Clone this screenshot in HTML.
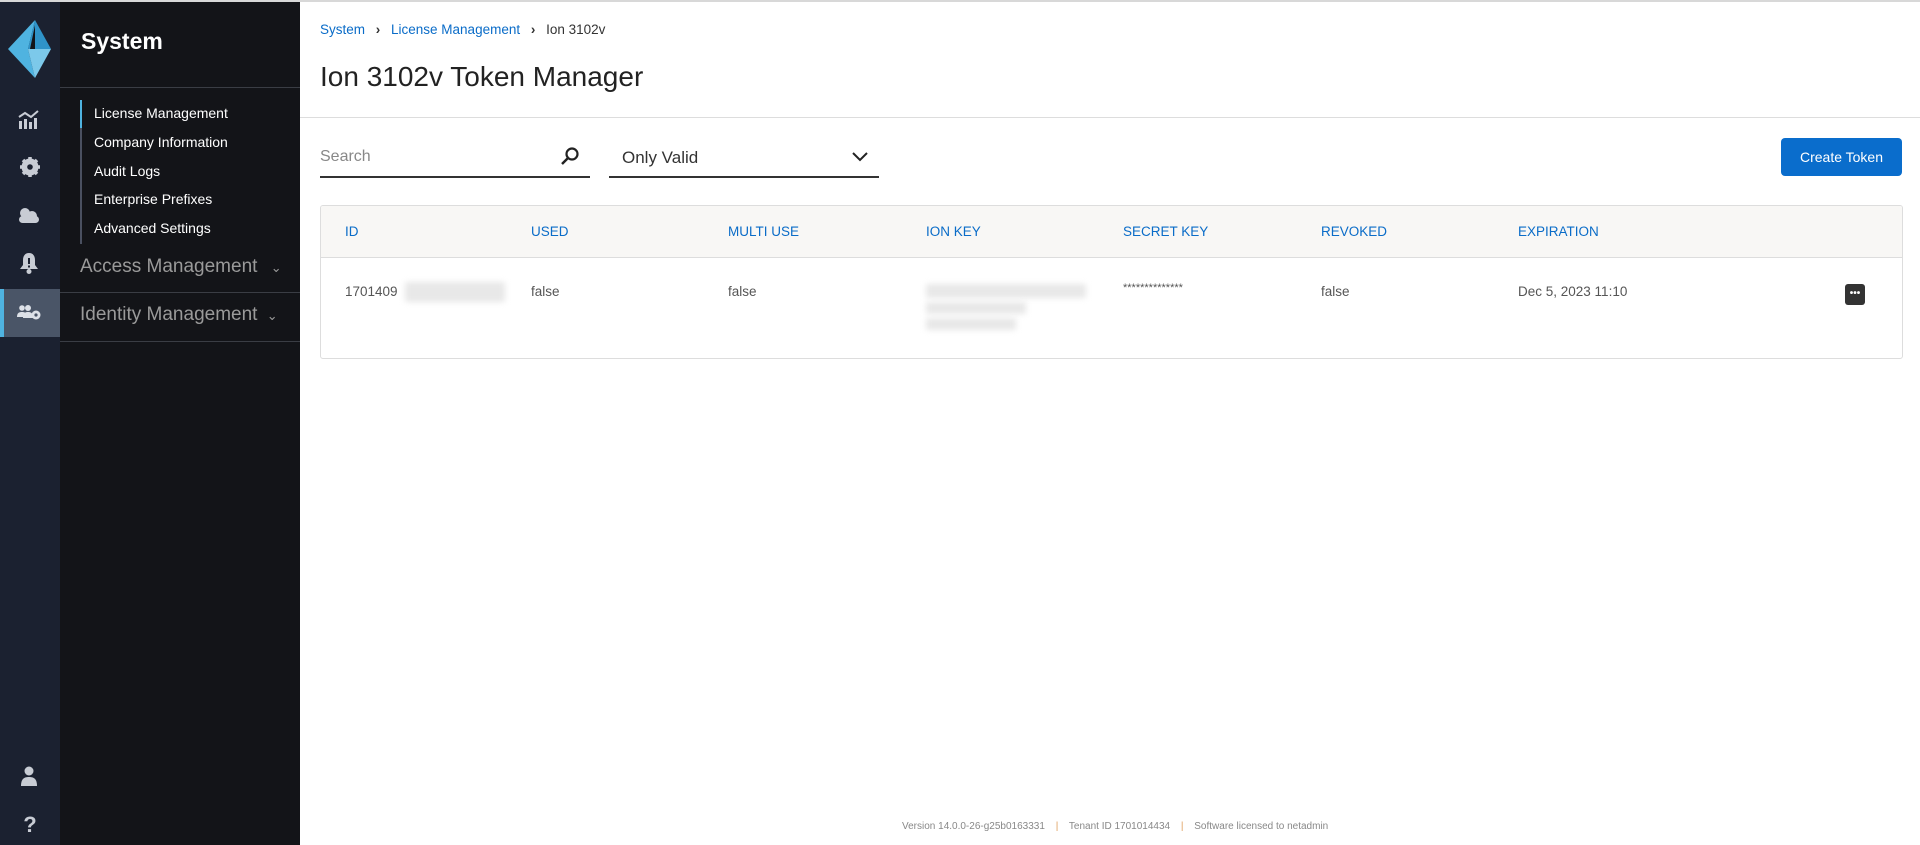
<!DOCTYPE html>
<html><head><meta charset="utf-8"><style>
*{box-sizing:border-box;margin:0;padding:0}
body{width:1920px;height:845px;overflow:hidden;font-family:"Liberation Sans",sans-serif;background:#fff;position:relative}
.abs{position:absolute}
.rail{left:0;top:0;width:60px;height:845px;background:#1b2130}
.sub{left:60px;top:0;width:240px;height:845px;background:#131418}
.ic{left:0;width:60px;text-align:center;color:#c8ccd4}
.nav{left:94px;color:#fff;font-size:14px}
.hdr{color:#0a6cc8;font-size:13.5px;top:224px}
.cell{color:#555;font-size:13.5px;top:284px}
.blur{background:#e8e8e8;filter:blur(3px)}
</style></head><body>
<div class="abs" style="left:0;top:0;width:1920px;height:2px;background:#d8d8d8;z-index:5"></div>
<div class="abs rail"></div>
<div class="abs sub"></div>
<svg class="abs" style="left:8px;top:20px" width="46" height="60" viewBox="0 0 46 60"><polygon points="27,0 0,29 20,29" fill="#4fb3e0"/><polygon points="27,0 20,29 43,29" fill="#2f93c8"/><polygon points="0,29 20,29 27,58" fill="#4fb3e0"/><polygon points="20,29 43,29 27,58" fill="#7cc9ea"/><polygon points="27,5 22,29 27,29" fill="#131418"/></svg>
<div class="abs" style="left:0;top:289px;width:60px;height:48px;background:#4a5567"></div>
<div class="abs" style="left:0;top:289px;width:4px;height:48px;background:#4fb3e0"></div>
<svg class="abs" style="left:18px;top:110px" width="22" height="20" viewBox="0 0 22 20" fill="#c8ccd4"><rect x="1" y="11" width="3" height="8"/><rect x="6" y="9" width="3" height="10"/><rect x="11" y="12" width="3" height="7"/><rect x="16" y="8" width="3" height="11"/><polyline points="1,7 7,3 13,7 20,1" fill="none" stroke="#c8ccd4" stroke-width="2"/></svg>
<svg class="abs" style="left:20px;top:157px" width="20" height="20" viewBox="0 0 20 20"><circle cx="10" cy="10" r="6.5" fill="none" stroke="#c8ccd4" stroke-width="4"/><g stroke="#c8ccd4" stroke-width="3.5"><line x1="10" y1="0" x2="10" y2="20"/><line x1="0" y1="10" x2="20" y2="10"/><line x1="3" y1="3" x2="17" y2="17"/><line x1="17" y1="3" x2="3" y2="17"/></g><circle cx="10" cy="10" r="2.8" fill="#1b2130"/></svg>
<svg class="abs" style="left:17px;top:206px" width="24" height="18" viewBox="0 0 24 18" fill="#c8ccd4"><circle cx="8" cy="7" r="5"/><circle cx="15" cy="10" r="5"/><rect x="2" y="10" width="20" height="7" rx="3.5"/></svg>
<svg class="abs" style="left:19px;top:252px" width="20" height="22" viewBox="0 0 20 22" fill="#c8ccd4"><path d="M10 1c-4 0-6 3-6 7v5l-3 4h18l-3-4V8c0-4-2-7-6-7z"/><circle cx="10" cy="19.5" r="2.5"/><rect x="9" y="6" width="2" height="6" fill="#1b2130"/><rect x="9" y="13.5" width="2" height="2" fill="#1b2130"/></svg>
<svg class="abs" style="left:17px;top:304px" width="26" height="17" viewBox="0 0 26 17" fill="#dde1e8"><circle cx="5" cy="4" r="2.8"/><circle cx="11" cy="4" r="3"/><path d="M0 13c0-4 2-5 5-5s5 1 5 5z"/><path d="M6 14c0-5 2-6 5-6s5 1 5 6z"/><circle cx="19" cy="11" r="4.5"/><circle cx="19" cy="11" r="1.6" fill="#4a5567"/></svg>
<svg class="abs" style="left:20px;top:766px" width="18" height="20" viewBox="0 0 18 20" fill="#c8ccd4"><circle cx="9" cy="5" r="4.5"/><path d="M1 20c0-7 3-9 8-9s8 2 8 9z"/></svg>
<div class="abs ic" style="top:812px;font-size:22px;font-weight:bold">?</div>

<div class="abs" style="left:81px;top:28px;color:#fff;font-size:23px;font-weight:bold">System</div>
<div class="abs" style="left:60px;top:87px;width:240px;height:1px;background:#3a3d44"></div>
<div class="abs" style="left:80px;top:100px;width:2px;height:144px;background:#4a5060"></div>
<div class="abs" style="left:80px;top:100px;width:2px;height:28px;background:#4fb3e0"></div>
<div class="abs nav" style="top:105px">License Management</div>
<div class="abs nav" style="top:134px">Company Information</div>
<div class="abs nav" style="top:163px">Audit Logs</div>
<div class="abs nav" style="top:191px">Enterprise Prefixes</div>
<div class="abs nav" style="top:220px">Advanced Settings</div>
<div class="abs" style="left:80px;top:256px;color:#9a9a9a;font-size:19px">Access Management <span style="font-size:13px;margin-left:8px">⌄</span></div>
<div class="abs" style="left:60px;top:292px;width:240px;height:1px;background:#3a3d44"></div>
<div class="abs" style="left:80px;top:304px;color:#9a9a9a;font-size:19px">Identity Management <span style="font-size:13px;margin-left:4px">⌄</span></div>
<div class="abs" style="left:60px;top:341px;width:240px;height:1px;background:#3a3d44"></div>

<div class="abs" style="left:320px;top:22px;font-size:13.5px;color:#0a6cc8">System <b style="color:#333;margin:0 7px">›</b> License Management <b style="color:#333;margin:0 7px">›</b> <span style="color:#333">Ion 3102v</span></div>
<div class="abs" style="left:320px;top:61px;font-size:28px;color:#222">Ion 3102v Token Manager</div>
<div class="abs" style="left:300px;top:117px;width:1620px;height:1px;background:#ddd"></div>

<div class="abs" style="left:320px;top:148px;font-size:16px;color:#888">Search</div>
<svg class="abs" style="left:560px;top:146px" width="20" height="20" viewBox="0 0 20 20"><circle cx="12" cy="8" r="5.5" fill="none" stroke="#222" stroke-width="2.2"/><line x1="8" y1="12" x2="2" y2="18" stroke="#222" stroke-width="2.5"/></svg>
<div class="abs" style="left:320px;top:176px;width:270px;height:2px;background:#333"></div>
<div class="abs" style="left:622px;top:148px;font-size:17px;color:#333">Only Valid</div>
<svg class="abs" style="left:852px;top:152px" width="16" height="10" viewBox="0 0 16 10"><polyline points="1,1 8,8 15,1" fill="none" stroke="#222" stroke-width="2"/></svg>
<div class="abs" style="left:609px;top:176px;width:270px;height:2px;background:#333"></div>
<div class="abs" style="left:1781px;top:138px;width:121px;height:38px;background:#0a6dcc;border-radius:4px;color:#fff;font-size:14px;text-align:center;line-height:38px">Create Token</div>

<div class="abs" style="left:320px;top:205px;width:1583px;height:154px;border:1px solid #ddd;border-radius:3px;overflow:hidden">
<div style="height:52px;background:#f8f7f5;border-bottom:1px solid #ddd"></div></div>
<div class="abs hdr" style="left:345px">ID</div>
<div class="abs hdr" style="left:531px">USED</div>
<div class="abs hdr" style="left:728px">MULTI USE</div>
<div class="abs hdr" style="left:926px">ION KEY</div>
<div class="abs hdr" style="left:1123px">SECRET KEY</div>
<div class="abs hdr" style="left:1321px">REVOKED</div>
<div class="abs hdr" style="left:1518px">EXPIRATION</div>
<div class="abs cell" style="left:345px">1701409</div>
<div class="abs blur" style="left:405px;top:282px;width:100px;height:20px"></div>
<div class="abs cell" style="left:531px">false</div>
<div class="abs cell" style="left:728px">false</div>
<div class="abs blur" style="left:926px;top:284px;width:160px;height:14px"></div>
<div class="abs blur" style="left:926px;top:302px;width:100px;height:12px"></div>
<div class="abs blur" style="left:926px;top:318px;width:90px;height:12px"></div>
<div class="abs cell" style="left:1123px;top:282px;font-size:11px">**************</div>
<div class="abs cell" style="left:1321px">false</div>
<div class="abs cell" style="left:1518px">Dec 5, 2023 11:10</div>
<div class="abs" style="left:1845px;top:284px;width:20px;height:21px;background:#333;border-radius:3px;color:#fff;font-size:10px;text-align:center;line-height:19px;font-weight:bold">•••</div>

<div class="abs" style="left:902px;top:821px;font-size:10px;color:#888;white-space:nowrap">Version 14.0.0-26-g25b0163331 <span style="color:#e0a060;margin:0 8px">|</span> Tenant ID 1701014434 <span style="color:#e0a060;margin:0 8px">|</span> Software licensed to netadmin</div>
</body></html>
